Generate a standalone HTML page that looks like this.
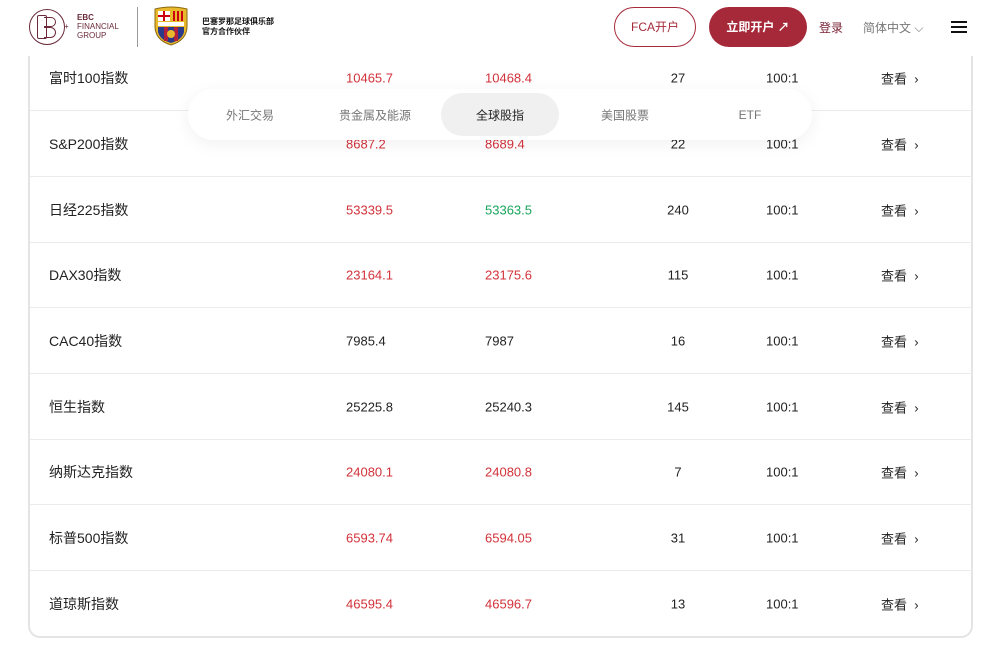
<!DOCTYPE html>
<html><head><meta charset="utf-8"><style>
*{margin:0;padding:0;box-sizing:border-box}
body{width:1000px;height:658px;overflow:hidden;background:#fff;font-family:"Liberation Sans","Noto Sans CJK SC",sans-serif;position:relative}
.card{position:absolute;left:28px;top:20px;width:945px;height:618px;border:2px solid #e4e4e4;border-top:none;border-radius:0 0 12px 12px;background:#fff}
.row{position:absolute;left:0;width:941px;height:66px;border-bottom:1px solid #ececec;font-size:13px;color:#222}
.row span{position:absolute;top:50%;transform:translateY(-50%);white-space:nowrap}
.n{left:19px;font-size:14px}
.a{left:316px}.b{left:455px}.c{left:618px;width:60px;text-align:center}
.d{left:736px}.e{left:851px}
.r{color:#d2323a}.g{color:#1aa55c}
.hdr{position:absolute;left:0;top:0;width:1000px;height:56px;background:#fff}
.tabs{position:absolute;left:188px;top:89px;width:624px;height:51px;border-radius:26px;background:rgba(255,255,255,.92);box-shadow:0 4px 18px rgba(0,0,0,.06);font-size:12px;color:#777}
.tabs span{position:absolute;top:50%;transform:translate(-50%,-50%)}
.act{position:absolute;left:253px;top:4px;width:118px;height:43px;border-radius:22px;background:#f0f0f0}
</style></head><body>
<div class="card">
<div class="row" style="top:25px"><span class="n">富时100指数</span><span class="a r">10465.7</span><span class="b r">10468.4</span><span class="c">27</span><span class="d">100:1</span><span class="e">查看 &nbsp;›</span></div>
<div class="row" style="top:91px"><span class="n">S&amp;P200指数</span><span class="a r">8687.2</span><span class="b r">8689.4</span><span class="c">22</span><span class="d">100:1</span><span class="e">查看 &nbsp;›</span></div>
<div class="row" style="top:157px"><span class="n">日经225指数</span><span class="a r">53339.5</span><span class="b g">53363.5</span><span class="c">240</span><span class="d">100:1</span><span class="e">查看 &nbsp;›</span></div>
<div class="row" style="top:222px"><span class="n">DAX30指数</span><span class="a r">23164.1</span><span class="b r">23175.6</span><span class="c">115</span><span class="d">100:1</span><span class="e">查看 &nbsp;›</span></div>
<div class="row" style="top:288px"><span class="n">CAC40指数</span><span class="a">7985.4</span><span class="b">7987</span><span class="c">16</span><span class="d">100:1</span><span class="e">查看 &nbsp;›</span></div>
<div class="row" style="top:354px"><span class="n">恒生指数</span><span class="a">25225.8</span><span class="b">25240.3</span><span class="c">145</span><span class="d">100:1</span><span class="e">查看 &nbsp;›</span></div>
<div class="row" style="top:419px"><span class="n">纳斯达克指数</span><span class="a r">24080.1</span><span class="b r">24080.8</span><span class="c">7</span><span class="d">100:1</span><span class="e">查看 &nbsp;›</span></div>
<div class="row" style="top:485px"><span class="n">标普500指数</span><span class="a r">6593.74</span><span class="b r">6594.05</span><span class="c">31</span><span class="d">100:1</span><span class="e">查看 &nbsp;›</span></div>
<div class="row" style="top:551px;border:none"><span class="n">道琼斯指数</span><span class="a r">46595.4</span><span class="b r">46596.7</span><span class="c">13</span><span class="d">100:1</span><span class="e">查看 &nbsp;›</span></div>
</div>
<div class="tabs"><div class="act"></div>
<span style="left:62px">外汇交易</span><span style="left:187px">贵金属及能源</span><span style="left:312px;color:#222">全球股指</span><span style="left:437px">美国股票</span><span style="left:562px">ETF</span></div>
<div class="hdr">
<div style="position:absolute;left:29px;top:9px;width:36px;height:36px;border:1.6px solid #6b2a3a;border-radius:50%"></div>
<div style="position:absolute;left:37px;top:15px;width:10px;height:24px;border:1.4px solid #6b2a3a;border-radius:2px"></div>
<div style="position:absolute;left:44px;top:17px;width:12px;height:10px;border:1.4px solid #6b2a3a;border-left:none;border-radius:0 6px 6px 0"></div>
<div style="position:absolute;left:44px;top:27px;width:12px;height:11px;border:1.4px solid #6b2a3a;border-left:none;border-radius:0 6px 6px 0"></div>
<div style="position:absolute;left:64px;top:22px;color:#6b2a3a;font-size:8px">+</div>
<div style="position:absolute;left:77px;top:13px;color:#6b2a3a;font-size:8px;line-height:9px;font-weight:bold">EBC</div>
<div style="position:absolute;left:77px;top:22px;color:#6b2a3a;font-size:8px;line-height:9px">FINANCIAL<br>GROUP</div>
<div style="position:absolute;left:137px;top:7px;width:1px;height:40px;background:#999"></div>
<svg style="position:absolute;left:152px;top:6px" width="38" height="40" viewBox="0 0 38 40"><path d="M3 3 Q19 -1 35 3 L35 18 Q36 34 19 39 Q2 34 3 18Z" fill="#e9b92c" stroke="#8a6a10"/><rect x="6" y="5" width="12" height="10" fill="#fff"/><rect x="11" y="5" width="2" height="10" fill="#c01"/><rect x="6" y="9" width="12" height="2" fill="#c01"/><rect x="20" y="5" width="12" height="10" fill="#e9b92c"/><rect x="21" y="5" width="2" height="10" fill="#c01"/><rect x="25" y="5" width="2" height="10" fill="#c01"/><rect x="29" y="5" width="2" height="10" fill="#c01"/><rect x="6" y="16" width="26" height="4" fill="#fff"/><path d="M6 21 L32 21 L32 26 Q30 34 19 37 Q8 34 6 26Z" fill="#2a3a8a"/><rect x="12" y="21" width="4" height="14" fill="#b0203a"/><rect x="22" y="21" width="4" height="14" fill="#b0203a"/><circle cx="19" cy="28" r="4" fill="#e9b92c"/></svg>
<div style="position:absolute;left:202px;top:17px;font-size:8px;line-height:10px;font-weight:bold;color:#111">巴塞罗那足球俱乐部<br>官方合作伙伴</div>
<div style="position:absolute;left:614px;top:7px;width:82px;height:40px;border:1.2px solid #a6293a;border-radius:20px;color:#a6293a;font-size:12px;text-align:center;line-height:38px">FCA开户</div>
<div style="position:absolute;left:709px;top:7px;width:98px;height:40px;background:#a6293a;border-radius:20px;color:#fff;font-size:12px;font-weight:bold;text-align:center;line-height:40px">立即开户 ↗</div>
<div style="position:absolute;left:819px;top:19px;font-size:12px;color:#7a2335">登录</div>
<div style="position:absolute;left:863px;top:19px;font-size:12px;color:#777">简体中文 ⌵</div>
<div style="position:absolute;left:951px;top:21px;width:16px;height:1.5px;background:#111;box-shadow:0 5px 0 #111,0 10px 0 #111"></div>
</div>
</body></html>
